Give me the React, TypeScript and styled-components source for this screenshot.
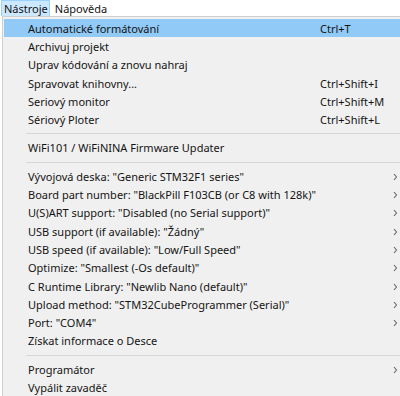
import React from 'react';
import styled, { createGlobalStyle } from 'styled-components';

const GlobalStyle = createGlobalStyle`
  html, body {
    margin: 0;
    padding: 0;
    background: #ffffff;
  }
  body {
    width: 400px;
    height: 396px;
    overflow: hidden;
    font-family: "Noto Sans", "Open Sans", sans-serif;
    font-size: 11px;
    color: #141414;
  }
`;

type Entry =
  | { kind: 'item'; label: string; shortcut?: string; sub?: boolean; active?: boolean }
  | { kind: 'sep' };

const entries: Entry[] = [
  { kind: 'item', label: 'Automatické formátování', shortcut: 'Ctrl+T', active: true },
  { kind: 'item', label: 'Archivuj projekt' },
  { kind: 'item', label: 'Uprav kódování a znovu nahraj' },
  { kind: 'item', label: 'Spravovat knihovny...', shortcut: 'Ctrl+Shift+I' },
  { kind: 'item', label: 'Seriový monitor', shortcut: 'Ctrl+Shift+M' },
  { kind: 'item', label: 'Sériový Ploter', shortcut: 'Ctrl+Shift+L' },
  { kind: 'sep' },
  { kind: 'item', label: 'WiFi101 / WiFiNINA Firmware Updater' },
  { kind: 'sep' },
  { kind: 'item', label: 'Vývojová deska: "Generic STM32F1 series"', sub: true },
  { kind: 'item', label: 'Board part number: "BlackPill F103CB (or C8 with 128k)"', sub: true },
  { kind: 'item', label: 'U(S)ART support: "Disabled (no Serial support)"', sub: true },
  { kind: 'item', label: 'USB support (if available): "Žádný"', sub: true },
  { kind: 'item', label: 'USB speed (if available): "Low/Full Speed"', sub: true },
  { kind: 'item', label: 'Optimize: "Smallest (-Os default)"', sub: true },
  { kind: 'item', label: 'C Runtime Library: "Newlib Nano (default)"', sub: true },
  { kind: 'item', label: 'Upload method: "STM32CubeProgrammer (Serial)"', sub: true },
  { kind: 'item', label: 'Port: "COM4"', sub: true },
  { kind: 'item', label: 'Získat informace o Desce' },
  { kind: 'sep' },
  { kind: 'item', label: 'Programátor', sub: true },
  { kind: 'item', label: 'Vypálit zavaděč' },
];

const MenuBar = styled.div`
  display: flex;
  align-items: stretch;
  gap: 2px;
  height: 16px;
  padding-left: 1px;
  background: #ffffff;
`;

const TopItem = styled.div<{ $open?: boolean }>`
  display: flex;
  align-items: center;
  padding: 0 1px 0 2px;
  height: 15px;
  border: 1px solid ${(p) => (p.$open ? '#99d1ff' : 'transparent')};
  border-bottom: none;
  background: ${(p) => (p.$open ? '#cce8ff' : 'transparent')};
  line-height: 15px;
`;

const Dropdown = styled.div`
  margin-left: 2px;
  border-top: 1px solid #cfcfcf;
  border-left: 1px solid #cfcfcf;
  background: #f0f0f0;
  padding: 2px 0 0 1px;
  height: 378px;
  overflow: hidden;
`;

const Row = styled.div<{ $active?: boolean }>`
  display: grid;
  grid-template-columns: 24px 292px 73px 1fr;
  align-items: center;
  height: 18.3px;
  background: ${(p) => (p.$active ? '#91c9f7' : 'transparent')};
  white-space: nowrap;
`;

const Label = styled.span`
  grid-column: 2;
`;

const Shortcut = styled.span`
  grid-column: 3;
`;

const Chevron = styled.svg`
  grid-column: 4;
  justify-self: start;
  margin-top: 1px;
`;

const Separator = styled.div`
  height: 10px;
  display: flex;
  align-items: center;
  padding-left: 22px;

  &::after {
    content: '';
    flex: 1;
    height: 1px;
    background: #d7d7d7;
  }
`;

export default function App() {
  return (
    <>
      <GlobalStyle />
      <MenuBar>
        <TopItem $open>Nástroje</TopItem>
        <TopItem>Nápověda</TopItem>
      </MenuBar>
      <Dropdown>
        {entries.map((e, i) =>
          e.kind === 'sep' ? (
            <Separator key={i} />
          ) : (
            <Row key={i} $active={e.active}>
              <Label>{e.label}</Label>
              {e.shortcut && <Shortcut>{e.shortcut}</Shortcut>}
              {e.sub && (
                <Chevron width="5" height="8" viewBox="0 0 5 8">
                  <path d="M1 1 L3.5 4 L1 7" fill="none" stroke="#666" strokeWidth="1.1" />
                </Chevron>
              )}
            </Row>
          )
        )}
      </Dropdown>
    </>
  );
}
